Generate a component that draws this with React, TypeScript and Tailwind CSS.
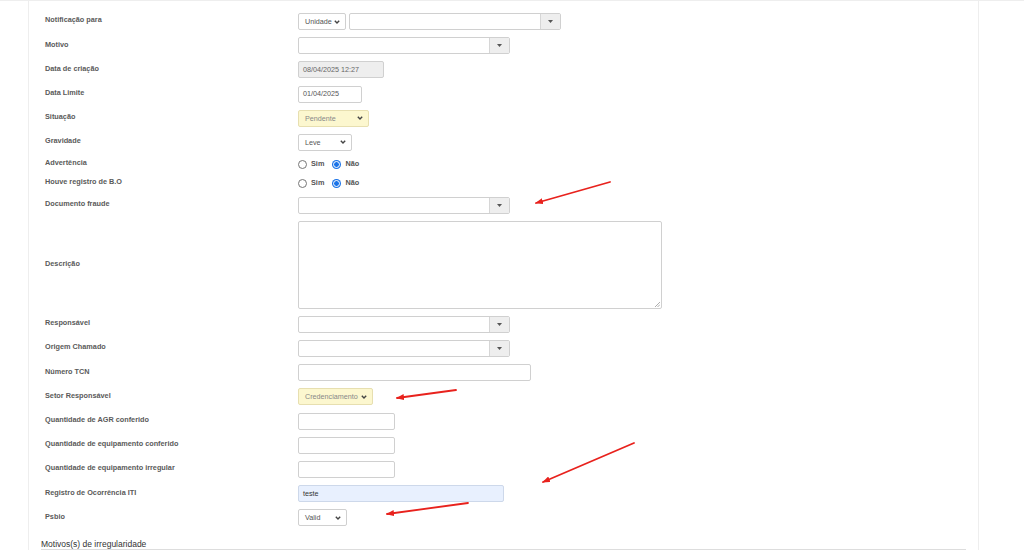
import type { ReactNode } from 'react';

const ctl = 'h-[17px] border rounded-[2px] text-[7.2px] leading-none flex items-center';

function Chevron() {
  return (
    <svg width="6" height="4" viewBox="0 0 6 4" className="shrink-0">
      <polyline points="0.8,0.8 3,3 5.2,0.8" fill="none" stroke="#444" strokeWidth="1.4" />
    </svg>
  );
}

function Select({ w, text, tone = 'plain' }: { w: string; text: string; tone?: 'plain' | 'yellow' }) {
  const look =
    tone === 'yellow'
      ? 'bg-[#fcf7cf] border-[#e7dfb0] text-[#888]'
      : 'bg-white border-[#d0d0d0] text-[#555]';
  return (
    <div className={`${ctl} ${w} ${look} justify-between pl-[6px] pr-[5px]`}>
      <span>{text}</span>
      <Chevron />
    </div>
  );
}

function Combo({ w = 'w-[212px]' }: { w?: string }) {
  return (
    <div className={`${ctl} ${w} border-[#d0d0d0] bg-white overflow-hidden`}>
      <div className="flex-1 h-full" />
      <div className="w-[20px] h-full bg-[#eee] border-l border-[#d6d6d6] flex items-center justify-center">
        <svg width="5" height="3" viewBox="0 0 5 3">
          <polygon points="0,0 5,0 2.5,3" fill="#555" />
        </svg>
      </div>
    </div>
  );
}

function Input({ w, text, tone = 'plain' }: { w: string; text?: string; tone?: 'plain' | 'disabled' | 'filled' }) {
  const look =
    tone === 'disabled'
      ? 'bg-[#eee] border-[#d0d0d0] text-[#666]'
      : tone === 'filled'
        ? 'bg-[#e8f0fe] border-[#cdd8ea] text-[#333]'
        : 'bg-white border-[#d0d0d0] text-[#555]';
  return <div className={`${ctl} ${w} ${look} pl-[4px]`}>{text}</div>;
}

function Radio({ checked }: { checked?: boolean }) {
  return checked ? (
    <span className="w-[9px] h-[9px] rounded-full bg-[#1a73e8] flex items-center justify-center">
      <span className="w-[7px] h-[7px] rounded-full border-[1.5px] border-white bg-[#1a73e8]" />
    </span>
  ) : (
    <span className="w-[9px] h-[9px] rounded-full border border-[#767676] bg-white" />
  );
}

function SimNao() {
  return (
    <div className="flex items-center h-[12px] text-[7.3px] font-bold text-[#555]">
      <Radio />
      <span className="ml-[4px]">Sim</span>
      <span className="ml-[8px]"><Radio checked /></span>
      <span className="ml-[4px]">Não</span>
    </div>
  );
}

function Row({ label, children }: { label: string; children: ReactNode }) {
  return (
    <div className="flex items-center">
      <div className="w-[253px] mb-[3px] text-[7.3px] leading-none font-bold text-[#5a5a5a]">{label}</div>
      {children}
    </div>
  );
}

export default function App() {
  return (
    <div className="w-[1024px] h-[550px] overflow-hidden bg-white relative border-t border-[#eee] font-['Liberation_Sans',Arial,sans-serif]">
      <div className="ml-[28px] w-[951px] h-full border-l border-r border-[#eee] pt-[12px]">
        <div className="flex flex-col gap-[7.2px] pl-[16px]">
          <Row label="Notificação para">
            <div className="flex gap-[3px]">
              <Select w="w-[48px]" text="Unidade" />
              <Combo />
            </div>
          </Row>
          <Row label="Motivo">
            <Combo />
          </Row>
          <Row label="Data de criação">
            <Input w="w-[86px]" text="08/04/2025 12:27" tone="disabled" />
          </Row>
          <Row label="Data Limite">
            <Input w="w-[64px]" text="01/04/2025" />
          </Row>
          <Row label="Situação">
            <Select w="w-[71px]" text="Pendente" tone="yellow" />
          </Row>
          <Row label="Gravidade">
            <Select w="w-[54px]" text="Leve" />
          </Row>
          <Row label="Advertência">
            <SimNao />
          </Row>
          <Row label="Houve registro de B.O">
            <SimNao />
          </Row>
          <Row label="Documento fraude">
            <Combo />
          </Row>
          <Row label="Descrição">
            <div className="relative w-[364px] h-[88px] border border-[#d0d0d0] rounded-[2px] bg-white">
              {/* resize grip */}
              <svg width="6" height="6" viewBox="0 0 6 6" className="absolute right-[1px] bottom-[1px]">
                <line x1="1" y1="6" x2="6" y2="1" stroke="#999" strokeWidth="0.8" />
                <line x1="3.5" y1="6" x2="6" y2="3.5" stroke="#999" strokeWidth="0.8" />
              </svg>
            </div>
          </Row>
          <Row label="Responsável">
            <Combo />
          </Row>
          <Row label="Origem Chamado">
            <Combo />
          </Row>
          <Row label="Número TCN">
            <Input w="w-[233px]" />
          </Row>
          <Row label="Setor Responsável">
            <Select w="w-[75px]" text="Credenciamento" tone="yellow" />
          </Row>
          <Row label="Quantidade de AGR conferido">
            <Input w="w-[97px]" />
          </Row>
          <Row label="Quantidade de equipamento conferido">
            <Input w="w-[97px]" />
          </Row>
          <Row label="Quantidade de equipamento irregular">
            <Input w="w-[97px]" />
          </Row>
          <Row label="Registro de Ocorrência ITI">
            <Input w="w-[206px]" text="teste" tone="filled" />
          </Row>
          <Row label="Psbio">
            <Select w="w-[49px]" text="Valid" />
          </Row>
        </div>

        <div className="mx-[12px] mt-[13px] h-[11px] border-b border-[#ddd] text-[8.5px] leading-[10px] text-[#333]">
          Motivos(s) de irregularidade
        </div>
      </div>

      {/* red annotation arrows */}
      <svg className="absolute inset-0 pointer-events-none" width="1024" height="550">
        <defs>
          <marker id="ah" markerWidth="8" markerHeight="6" refX="7" refY="3" orient="auto" markerUnits="userSpaceOnUse">
            <path d="M0,0 L8,3 L0,6 z" fill="#e8221d" />
          </marker>
        </defs>
        <g stroke="#e8221d" strokeWidth="1.8" strokeLinecap="round" markerEnd="url(#ah)">
          <line x1="610" y1="181" x2="536" y2="202" />
          <line x1="456" y1="389" x2="397" y2="397" />
          <line x1="634" y1="442" x2="543" y2="481" />
          <line x1="468" y1="502" x2="387" y2="513" />
        </g>
      </svg>
    </div>
  );
}
